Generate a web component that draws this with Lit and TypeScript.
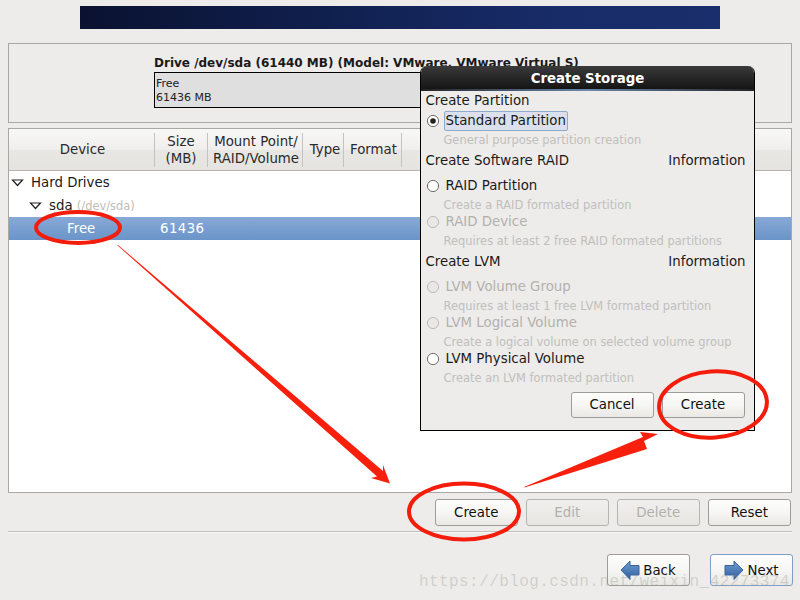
import { LitElement, html, css, svg } from "lit";
import { customElement } from "lit/decorators.js";

@customElement("app-root")
export class AppRoot extends LitElement {
  static styles = css`
    :host { display: block; position: relative; width: 800px; height: 600px; overflow: hidden; background: #edecea;
      font-family: "DejaVu Sans", sans-serif; font-size: 13.33px; color: #1a1a1a; }
    * { box-sizing: border-box; }
    .page { display: flex; flex-direction: column; height: 600px; padding: 6px 7px 0 8px; }
    .banner { width: 640px; height: 23px; margin-left: 72px; flex: none;
      background: linear-gradient(90deg, #0a1230 0%, #10204f 40%, #182c69 75%, #1a2d6c 100%); }
    .drive { flex: none; margin-top: 14px; margin-right: 1px; height: 80px; border: 1px solid #a9a8a4; padding: 0 0 0 145px; }
    .drive-title { font-weight: bold; font-size: 12px; height: 28px; line-height: 14px; padding-top: 12px; white-space: nowrap; }
    .bar { width: 500px; height: 36px; border: 1px solid #000; background: #dfdfdf; font-size: 11px; line-height: 14px; padding: 4px 0 0 1px; color: #222; }
    .tree { flex: none; margin-top: 5px; margin-right: 1px; height: 365px; border: 1px solid #a9a8a4; background: #fff; }
    .head { display: grid; grid-template-columns: 146px 53px 95px 41px 58px 1fr; height: 42px; align-items: center; border-bottom: 1px solid #b5b4b0;
      background: linear-gradient(#f8f8f6 0%, #efeeec 50%, #e8e7e3 51%, #e5e4e0 100%); line-height: 17px; color: #2a2a2a; }
    .head div { height: 34px; display: flex; align-items: center; justify-content: center; text-align: center; border-right: 1px solid #c4c3bf; }
    .head div:last-child { border-right: none; }
    .head .p2 { padding-left: 2px; }
    .head .p3 { padding-left: 4px; }
    .row { height: 23px; display: flex; align-items: center; }
    .row svg { flex: none; }
    .r1 { padding-left: 2px; gap: 7px; }
    .r2 { padding-left: 20px; gap: 7px; }
    .muted { color: #bdbdbb; font-size: 11.45px; }
    .sel { display: grid; grid-template-columns: 151px 1fr; background: linear-gradient(#88a9d7, #6a94c8); color: #fff; }
    .sel span:first-child { padding-left: 58px; }
    .num { letter-spacing: 0.4px; }
    .actions { display: flex; justify-content: flex-end; gap: 8.5px; margin-top: 6px; padding-right: 2.5px; flex: none; }
    .btn { flex: none; width: 82.5px; height: 27px; border: 1px solid #9d9c98; border-radius: 3px; display: flex; align-items: center; justify-content: center; gap: 3px;
      background: linear-gradient(#fdfdfc 0%, #f6f6f4 50%, #e9e8e5 100%); color: #111; }
    .btn.off { color: #b2b1ae; background: linear-gradient(#f0efed, #e7e6e3); border-color: #b5b4b0; }
    .sep { flex: none; margin-top: 5px; margin-right: 1px; height: 2px; background: #c2c1bd; border-bottom: 1px solid #f8f8f7; }
    .nav { display: flex; justify-content: flex-end; gap: 20.5px; margin-top: 21px; flex: none; }
    .nav .btn { height: 32px; width: 83px; }
    .nav .next { border: 1.5px solid #7f9fc9; }
    .dialog { position: absolute; left: 420px; top: 66px; width: 335px; height: 365px; background: #edecea; border: 1.5px solid #000; border-top: none; border-radius: 7px 7px 0 0; display: flex; flex-direction: column; overflow: hidden; }
    .title { height: 25px; flex: none; background: linear-gradient(#3a3a3a, #151515); border-bottom: 2px solid; border-image: linear-gradient(90deg,#222,#6b88ad 50%,#222) 1;
      color: #fff; font-weight: bold; display: flex; align-items: center; justify-content: center; padding-top: 1px; font-size: 13.33px; }
    .body { padding: 0 8.5px 0 4.5px; }
    .sect { display: flex; justify-content: space-between; }
    .s0 { height: 19.5px; line-height: 20px; }
    .s1 { height: 28px; line-height: 24px; }
    .s2 { height: 29px; line-height: 26px; }
    .opt { display: flex; align-items: center; height: 18px; }
    .opt.std { height: 20px; }
    .opt svg { flex: none; margin-right: 5px; }
    .opt.off { color: #b2b1ae; }
    .lbl { padding: 0 1px; }
    .std .lbl { height: 20px; line-height: 18px; border: 1px solid #8eabcc; border-radius: 2px; background: #dbe1ec; }
    .std svg { margin-right: 4px; }
    .desc { height: 18px; padding: 2px 0 0 18px; line-height: 16px; font-size: 11.45px; color: #c0bfbd; white-space: nowrap; }
    .desc.first { padding-top: 1px; }
    .dbtns { display: flex; justify-content: flex-end; gap: 8px; margin-top: 6px; margin-right: 1px; }
    .dbtns .btn { height: 26px; width: 83px; }
    .over { position: absolute; left: 0; top: 0; pointer-events: none; }
    .mark { position: absolute; left: 419px; top: 572px; font-family: "Liberation Mono", monospace; font-size: 16px; letter-spacing: 0.42px; color: rgba(150,150,140,.34); white-space: nowrap; line-height: 20px; }
  `;

  private radio(checked = false, off = false) {
    const stroke = off ? "#bdbcb9" : "#6f6f6c";
    const fill = off ? "#e9e8e6" : "#fff";
    return html`<svg width="14" height="14" viewBox="0 0 14 14">
      <circle cx="7" cy="7" r="5.6" fill=${fill} stroke=${stroke} stroke-width="1"></circle>
      ${checked ? svg`<circle cx="7" cy="7" r="2.8" fill="#222"></circle>` : ""}
    </svg>`;
  }

  private expander() {
    return html`<svg width="13" height="10" viewBox="0 0 13 10"><path d="M1.5 2 H11.5 L6.5 7.5 Z" fill="#fff" stroke="#222" stroke-width="1.2"></path></svg>`;
  }

  private option(label: string, desc: string, off = false) {
    return html`<div class="opt ${off ? "off" : ""}">${this.radio(false, off)}<span class="lbl">${label}</span></div>
      <div class="desc">${desc}</div>`;
  }

  render() {
    return html`
      <div class="page">
        <div class="banner"></div>
        <div class="drive">
          <div class="drive-title">Drive /dev/sda (61440 MB) (Model: VMware, VMware Virtual S)</div>
          <div class="bar">Free<br />61436 MB</div>
        </div>
        <div class="tree">
          <div class="head">
            <div class="p2">Device</div><div>Size<br />(MB)</div><div class="p2">Mount Point/<br />RAID/Volume</div><div class="p3">Type</div><div class="p2">Format</div><div></div>
          </div>
          <div class="row r1">${this.expander()}<span>Hard Drives</span></div>
          <div class="row r2">${this.expander()}<span>sda <span class="muted">(/dev/sda)</span></span></div>
          <div class="row sel"><span>Free</span><span class="num">61436</span></div>
        </div>
        <div class="actions">
          <div class="btn">Create</div><div class="btn off">Edit</div><div class="btn off">Delete</div><div class="btn">Reset</div>
        </div>
        <div class="sep"></div>
        <div class="nav">
          <div class="btn"><svg width="20" height="20" viewBox="0 0 20 20"><defs><linearGradient id="a" x1="0" y1="0" x2="0" y2="1"><stop offset="0" stop-color="#6f9bd0"></stop><stop offset="1" stop-color="#2f619f"></stop></linearGradient></defs><path d="M1 10 L10 1 V5.5 H19 V15 H10 V19.5 Z" fill="url(#a)" stroke="#3a659c" stroke-width="1"></path></svg><span>Back</span></div>
          <div class="btn next"><svg width="20" height="20" viewBox="0 0 20 20"><path d="M19 10 L10 1 V5.5 H1 V15 H10 V19.5 Z" fill="url(#a)" stroke="#3a659c" stroke-width="1"></path></svg><span>Next</span></div>
        </div>
      </div>

      <div class="dialog">
        <div class="title">Create Storage</div>
        <div class="body">
          <div class="sect s0"><span>Create Partition</span></div>
          <div class="opt std">${this.radio(true)}<span class="lbl">Standard Partition</span></div>
          <div class="desc first">General purpose partition creation</div>
          <div class="sect s1"><span>Create Software RAID</span><span>Information</span></div>
          ${this.option("RAID Partition", "Create a RAID formated partition")}
          ${this.option("RAID Device", "Requires at least 2 free RAID formated partitions", true)}
          <div class="sect s2"><span>Create LVM</span><span>Information</span></div>
          ${this.option("LVM Volume Group", "Requires at least 1 free LVM formated partition", true)}
          ${this.option("LVM Logical Volume", "Create a logical volume on selected volume group", true)}
          ${this.option("LVM Physical Volume", "Create an LVM formated partition")}
          <div class="dbtns"><div class="btn">Cancel</div><div class="btn">Create</div></div>
        </div>
      </div>

      <div class="mark">https://blog.csdn.net/weixin_42273374</div>

      <svg class="over" width="800" height="600" viewBox="0 0 800 600">
        <g fill="none" stroke="#f41d0b" stroke-width="4">
          <ellipse cx="78" cy="227.5" rx="42" ry="15.5"></ellipse>
          <ellipse cx="464" cy="511.5" rx="55" ry="28"></ellipse>
          <ellipse cx="713" cy="404.5" rx="54" ry="33" transform="rotate(-4 713 404.5)"></ellipse>
        </g>
        <g fill="#f8200c">
          <path d="M117 245 L118 245 L383 471 L383 465 L390 483.5 L371 478 L377 476.5 Z"></path>
          <path d="M524 487 L524.5 487.5 L647 449 L644 441 L658 434 L640 432 L643 437 Z"></path>
        </g>
      </svg>
    `;
  }
}
